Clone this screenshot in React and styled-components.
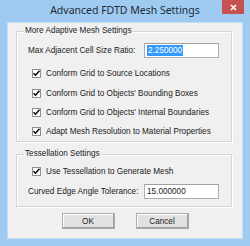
import React from "react";
import styled, { createGlobalStyle } from "styled-components";

const Global = createGlobalStyle`
  html, body { margin: 0; padding: 0; background: #fff; }
  * { box-sizing: border-box; }
`;

const Window = styled.div`
  width: 250px;
  height: 246px;
  background: #9fcbf1;
  display: flex;
  flex-direction: column;
  font-family: "Liberation Sans", Arial, sans-serif;
`;

const TitleBar = styled.div`
  height: 22px;
  display: grid;
  grid-template-columns: 28px 1fr 28px;
  align-items: start;
`;

const Title = styled.div`
  grid-column: 2;
  text-align: center;
  font-family: "Noto Sans", "Open Sans", sans-serif;
  font-size: 10.5px;
  line-height: 20px;
  color: #1e2a38;
`;

const CloseButton = styled.div`
  grid-column: 3;
  width: 22px;
  height: 14px;
  background: #c75050;
  display: flex;
  align-items: center;
  justify-content: center;
  justify-self: start;
`;

const Content = styled.div`
  flex: 1;
  margin: 0 7px 7px;
  background: #f0f0f0;
  border: 1px solid #c5dff6;
  padding: 3px 10px 0 8px;
  display: flex;
  flex-direction: column;
`;

const Group = styled.fieldset`
  margin: 0 0 ${(p) => p.$mb}px;
  padding: ${(p) => p.$pad};
  border: 1px solid #d5d5d5;
  box-shadow: inset 1px 1px 0 #fff, 1px 1px 0 #fff;
  display: flex;
  flex-direction: column;
`;

const Legend = styled.legend`
  padding: 0 1px;
  margin-left: 1px;
  font-size: 8.2px;
  line-height: 10px;
  color: #1a1a1a;
`;

const Row = styled.div`
  display: flex;
  align-items: center;
  height: ${(p) => p.$h}px;
  margin-top: ${(p) => p.$mt || 0}px;
  font-size: 8.2px;
  color: #1a1a1a;
`;

const FieldLabel = styled.span`
  width: ${(p) => p.$w}px;
  padding-left: ${(p) => p.$indent}px;
`;

const Input = styled.div`
  width: 75px;
  height: 15px;
  background: #fff;
  border: 1px solid #abadb3;
  border-top-color: #a0a0a0;
  display: flex;
  align-items: center;
  padding-left: 2px;
  font-size: 8.2px;
`;

const Selected = styled.span`
  background: #3399ff;
  color: #fff;
  padding: 0 1px;
  line-height: 11px;
`;

const CheckRow = styled.label`
  display: flex;
  align-items: center;
  gap: 5px;
  height: ${(p) => p.$h}px;
  margin-top: ${(p) => p.$mt || 0}px;
  padding-left: ${(p) => p.$indent}px;
  font-size: 8.2px;
  color: #1a1a1a;
`;

const Box = styled.span`
  width: 9px;
  height: 9px;
  background: #fff;
  border: 1px solid #8e8f8f;
  display: flex;
  align-items: center;
  justify-content: center;
`;

const Buttons = styled.div`
  display: flex;
  justify-content: center;
  gap: 21px;
  padding-left: 2px;
`;

const Button = styled.div`
  width: 53px;
  height: 16px;
  background: #e1e1e1;
  border: 1px solid #adadad;
  box-shadow: inset -1px -1px 0 #a0a0a0, inset 1px 1px 0 #fff;
  display: flex;
  align-items: center;
  justify-content: center;
  font-size: 8.2px;
  color: #1a1a1a;
`;

const Check = ({ label, h, mt, indent }) => (
  <CheckRow $h={h} $mt={mt} $indent={indent}>
    <Box>
      <svg width="7" height="7" viewBox="0 0 7 7">
        <path d="M0.5 3.2 L2.5 5.3 L6.5 0.8" stroke="#000" strokeWidth="1.4" fill="none" />
      </svg>
    </Box>
    {label}
  </CheckRow>
);

export default function App() {
  return (
    <>
      <Global />
      <Window>
        <TitleBar>
          <Title>Advanced FDTD Mesh Settings</Title>
          <CloseButton>
            <svg width="7" height="7" viewBox="0 0 7 7">
              <path d="M1 1 L6 6 M6 1 L1 6" stroke="#fff" strokeWidth="1.6" />
            </svg>
          </CloseButton>
        </TitleBar>
        <Content>
          <Group $mb={7} $pad="6px 6px 0">
            <Legend>More Adaptive Mesh Settings</Legend>
            <Row $h={16}>
              <FieldLabel $w={121} $indent={5}>Max Adjacent Cell Size Ratio:</FieldLabel>
              <Input>
                <Selected>2.250000</Selected>
              </Input>
            </Row>
            <Check label="Conform Grid to Source Locations" h={20} mt={5} indent={9} />
            <Check label="Conform Grid to Objects' Bounding Boxes" h={20} indent={9} />
            <Check label="Conform Grid to Objects' Internal Boundaries" h={19} indent={9} />
            <Check label="Adapt Mesh Resolution to Material Properties" h={19} indent={9} />
          </Group>
          <Group $mb={6} $pad="4px 6px 5px">
            <Legend>Tessellation Settings</Legend>
            <Check label="Use Tessellation to Generate Mesh" h={16} indent={9} />
            <Row $h={20} $mt={2}>
              <FieldLabel $w={121} $indent={5}>Curved Edge Angle Tolerance:</FieldLabel>
              <Input>15.000000</Input>
            </Row>
          </Group>
          <Buttons>
            <Button>OK</Button>
            <Button>Cancel</Button>
          </Buttons>
        </Content>
      </Window>
    </>
  );
}
